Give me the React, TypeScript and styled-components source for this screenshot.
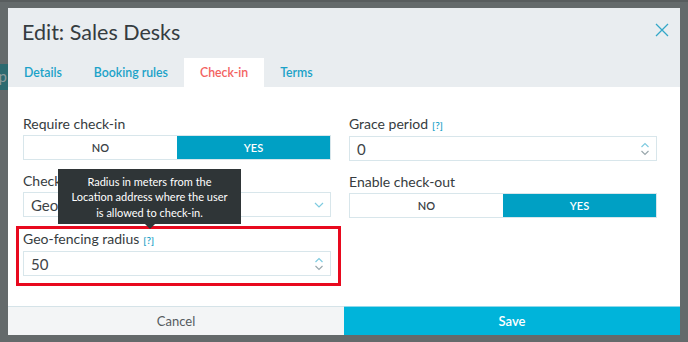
import React from "react";
import styled, { createGlobalStyle } from "styled-components";

const GlobalStyle = createGlobalStyle`
  html, body {
    margin: 0;
    padding: 0;
    background: #646a6b;
    font-family: Lato, "Open Sans", sans-serif;
  }
`;

const Backdrop = styled.div`
  position: relative;
  width: 688px;
  height: 342px;
  padding: 8px;
  box-sizing: border-box;
  background: #646a6b;
  border-top: 2px solid #585d5e;
  overflow: hidden;
`;

const PageButton = styled.div`
  position: absolute;
  left: -10px;
  top: 62px;
  width: 18px;
  height: 26px;
  background: #2c6a70;
  color: #8a9a9c;
  font-size: 15px;
  line-height: 24px;
  text-align: right;
  padding-right: 1px;
  box-sizing: border-box;
`;

const Modal = styled.div`
  position: relative;
  display: flex;
  flex-direction: column;
  width: 672px;
  height: 327px;
  margin-top: -2px;
  background: #ffffff;
`;

const Header = styled.div`
  background: #e9edf0;
  height: 79px;
  display: flex;
  flex-direction: column;
  justify-content: space-between;
`;

const TitleRow = styled.div`
  display: flex;
  justify-content: space-between;
  padding: 11px 11px 0 14px;
`;

const Title = styled.h1`
  margin: 0;
  font-size: 21.5px;
  line-height: 26px;
  font-weight: 400;
  color: #353c40;
`;

const CloseButton = styled.button`
  border: 0;
  background: none;
  padding: 0;
  margin-top: 4px;
  width: 14px;
  height: 14px;
  cursor: pointer;
`;

const Tabs = styled.div`
  display: flex;
  height: 29px;
`;

const Tab = styled.div<{ $active?: boolean }>`
  padding: 0 16px;
  display: flex;
  align-items: center;
  font-size: 12.3px;
  font-weight: 600;
  color: ${(p) => (p.$active ? "#f3625f" : "#1ba2c8")};
  background: ${(p) => (p.$active ? "#ffffff" : "transparent")};
`;

const Body = styled.div`
  flex: 1;
  display: grid;
  grid-template-columns: 308px 308px;
  column-gap: 18px;
  padding: 28px 23px 0 15px;
  align-items: start;
`;

const Column = styled.div`
  display: flex;
  flex-direction: column;
`;

const Field = styled.div`
  display: flex;
  flex-direction: column;
  & + & {
    margin-top: 12px;
  }
`;

const Highlight = styled.div`
  position: relative;
  display: flex;
  flex-direction: column;
  margin: 9px -10px 0 -7px;
  padding: 1px 7px 7px 4px;
  border: 3px solid #e8091e;
`;

const Label = styled.label`
  font-size: 14px;
  line-height: 18px;
  color: #363c40;
  margin-bottom: 2px;
`;

const Help = styled.span`
  font-size: 10px;
  font-weight: 600;
  color: #1ba2c8;
  margin-left: 4px;
`;

const Toggle = styled.div`
  display: flex;
  height: 25px;
  border: 1px solid #d8e6eb;
  box-sizing: border-box;
`;

const ToggleOption = styled.div<{ $on?: boolean }>`
  flex: 1;
  display: flex;
  align-items: center;
  justify-content: center;
  font-size: 11px;
  font-weight: 600;
  color: ${(p) => (p.$on ? "#ffffff" : "#3a4145")};
  background: ${(p) => (p.$on ? "#00a0c4" : "#ffffff")};
`;

const Input = styled.div`
  display: flex;
  align-items: center;
  justify-content: space-between;
  height: 25px;
  border: 1px solid #d8e6eb;
  box-sizing: border-box;
  padding: 0 6px 0 7px;
  font-size: 15px;
  color: #3e4448;
`;

const Tooltip = styled.div`
  position: absolute;
  left: 39px;
  bottom: calc(100% + 5px);
  width: 183px;
  padding: 5px 0 4px;
  background: #2f3537;
  color: #ffffff;
  font-size: 11px;
  line-height: 15.5px;
  text-align: center;

  &::after {
    content: "";
    position: absolute;
    left: 50%;
    top: 100%;
    margin-left: -5px;
    border: 5px solid transparent;
    border-top-color: #2f3537;
    border-bottom: 0;
  }
`;

const Footer = styled.div`
  display: grid;
  grid-template-columns: 1fr 1fr;
  height: 29px;
`;

const FooterButton = styled.button<{ $primary?: boolean }>`
  border: 0;
  border-top: 1px solid ${(p) => (p.$primary ? "#8fd8ea" : "#d5e3e8")};
  background: ${(p) => (p.$primary ? "#00b4da" : "#f3f5f6")};
  color: ${(p) => (p.$primary ? "#ffffff" : "#555b5e")};
  font-family: inherit;
  font-size: 13px;
  font-weight: ${(p) => (p.$primary ? 600 : 400)};
  cursor: pointer;
`;

const CloseIcon = () => (
  <svg width="14" height="14" viewBox="0 0 14 14">
    <path d="M1 1L13 13M13 1L1 13" stroke="#34a7c8" strokeWidth="1.3" />
  </svg>
);

const Chevron = () => (
  <svg width="10" height="6" viewBox="0 0 10 6">
    <path d="M1 1L5 5L9 1" stroke="#7fcbe0" strokeWidth="1.2" fill="none" />
  </svg>
);

const Spinner = () => (
  <svg width="10" height="14" viewBox="0 0 10 14">
    <path d="M1.5 5L5 1.5L8.5 5" stroke="#7fcbe0" strokeWidth="1.2" fill="none" />
    <path d="M1.5 9L5 12.5L8.5 9" stroke="#9aa8ad" strokeWidth="1.2" fill="none" />
  </svg>
);

const YesNo: React.FC<{ value: boolean }> = ({ value }) => (
  <Toggle>
    <ToggleOption $on={!value}>NO</ToggleOption>
    <ToggleOption $on={value}>YES</ToggleOption>
  </Toggle>
);

export default function App() {
  return (
    <>
      <GlobalStyle />
      <Backdrop>
        <PageButton>p</PageButton>
        <Modal>
          <Header>
            <TitleRow>
              <Title>Edit: Sales Desks</Title>
              <CloseButton aria-label="Close">
                <CloseIcon />
              </CloseButton>
            </TitleRow>
            <Tabs>
              <Tab>Details</Tab>
              <Tab>Booking rules</Tab>
              <Tab $active>Check-in</Tab>
              <Tab>Terms</Tab>
            </Tabs>
          </Header>

          <Body>
            <Column>
              <Field>
                <Label>Require check-in</Label>
                <YesNo value={true} />
              </Field>
              <Field>
                <Label>Check-in method</Label>
                <Input>
                  <span>Geo-fencing</span>
                  <Chevron />
                </Input>
              </Field>
              <Highlight>
                <Tooltip>
                  Radius in meters from the
                  <br />
                  Location address where the user
                  <br />
                  is allowed to check-in.
                </Tooltip>
                <Label>
                  Geo-fencing radius<Help>[?]</Help>
                </Label>
                <Input>
                  <span>50</span>
                  <Spinner />
                </Input>
              </Highlight>
            </Column>

            <Column>
              <Field>
                <Label>
                  Grace period<Help>[?]</Help>
                </Label>
                <Input>
                  <span>0</span>
                  <Spinner />
                </Input>
              </Field>
              <Field>
                <Label>Enable check-out</Label>
                <YesNo value={true} />
              </Field>
            </Column>
          </Body>

          <Footer>
            <FooterButton>Cancel</FooterButton>
            <FooterButton $primary>Save</FooterButton>
          </Footer>
        </Modal>
      </Backdrop>
    </>
  );
}
